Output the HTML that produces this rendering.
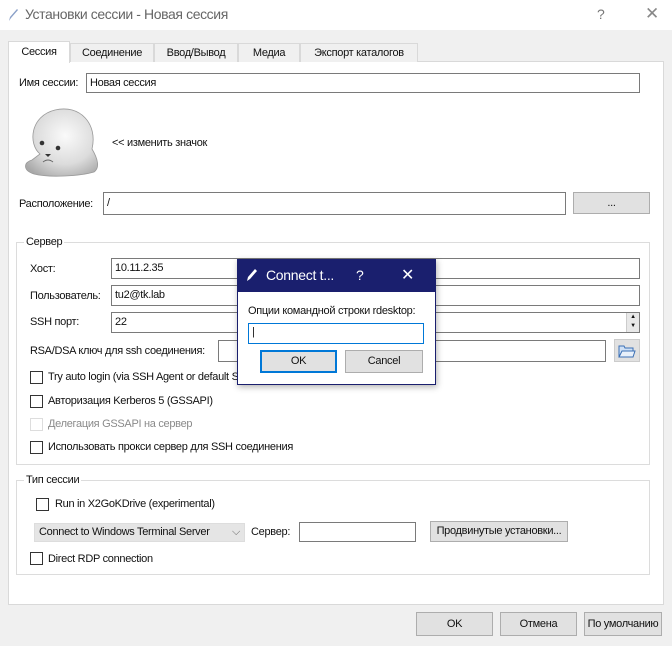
<!DOCTYPE html>
<html><head><meta charset="utf-8"><style>
*{box-sizing:border-box;margin:0;padding:0}
body{width:672px;height:646px;overflow:hidden;background:#f0f0f0;font-family:"Liberation Sans",sans-serif;font-size:11px;color:#111;position:relative;letter-spacing:-0.3px}
.a{position:absolute;white-space:nowrap}
.inp{position:absolute;background:#fff;border:1px solid #7a7a7a;padding-left:3px;line-height:19px}
.btn{position:absolute;background:#e1e1e1;border:1px solid #adadad;text-align:center}
.cb{position:absolute;width:13px;height:13px;border:1px solid #333;background:#fff}
.tab{position:absolute;top:43px;height:19px;border:1px solid #d9d9d9;border-bottom:none;background:#f0f0f0;text-align:center;line-height:18px}
.grp{position:absolute;border:1px solid #dcdcdc}
.gt{position:absolute;background:#fff;padding:0 2px}
</style></head><body>
<div class="a" style="left:0;top:0;width:672px;height:30px;background:#fff"></div>
<svg class="a" style="left:7px;top:8px" width="12" height="14"><path d="M2 13 L3 9 L10 1 L11 2 L4 10 Z" fill="#8aa0c8"/></svg>
<div class="a" style="left:25px;top:6px;font-size:14px;color:#666;letter-spacing:-0.4px">Установки сессии - Новая сессия</div>
<div class="a" style="left:597px;top:6px;font-size:14px;color:#777">?</div>
<div class="a" style="left:645px;top:4px;font-size:17px;color:#888;font-weight:100">✕</div>

<div class="a" style="left:8px;top:61px;width:656px;height:544px;background:#fff;border:1px solid #d9d9d9"></div>
<div class="tab" style="left:8px;top:41px;width:62px;height:22px;background:#fff;line-height:20px">Сессия</div>
<div class="tab" style="left:70px;width:84px">Соединение</div>
<div class="tab" style="left:154px;width:84px">Ввод/Вывод</div>
<div class="tab" style="left:238px;width:62px">Медиа</div>
<div class="tab" style="left:300px;width:118px">Экспорт каталогов</div>

<div class="a" style="left:19px;top:77px">Имя сессии:</div>
<div class="inp" style="left:86px;top:73px;width:554px;height:20px;line-height:18px">Новая сессия</div>

<svg class="a" style="left:20px;top:104px" width="82" height="75" viewBox="0 0 82 75">
<defs><radialGradient id="g" cx="0.55" cy="0.4" r="0.7"><stop offset="0" stop-color="#fafafa"/><stop offset="0.6" stop-color="#dcdcdc"/><stop offset="1" stop-color="#a8a8a8"/></radialGradient></defs>
<path d="M20 50 C8 40 10 12 35 6 C60 0 78 20 72 45 C78 55 80 64 74 68 C60 72 30 74 14 70 C2 66 4 58 12 56 Z" fill="url(#g)" stroke="#999" stroke-width="0.8"/>
<circle cx="22" cy="39" r="2.3" fill="#333"/><circle cx="38" cy="44" r="2.3" fill="#333"/>
<path d="M25 50 L31 50 L28 53 Z" fill="#333"/><path d="M23 58 Q28 54 33 58" stroke="#666" fill="none"/>
</svg>
<div class="a" style="left:112px;top:137px">&lt;&lt; изменить значок</div>

<div class="a" style="left:19px;top:198px">Расположение:</div>
<div class="inp" style="left:103px;top:192px;width:463px;height:23px;line-height:21px">/</div>
<div class="btn" style="left:573px;top:192px;width:77px;height:22px;line-height:20px">...</div>

<div class="grp" style="left:16px;top:242px;width:634px;height:223px"></div>
<div class="gt" style="left:24px;top:236px">Сервер</div>
<div class="a" style="left:30px;top:263px">Хост:</div>
<div class="inp" style="left:111px;top:258px;width:529px;height:21px">10.11.2.35</div>
<div class="a" style="left:30px;top:290px">Пользователь:</div>
<div class="inp" style="left:111px;top:285px;width:529px;height:21px">tu2@tk.lab</div>
<div class="a" style="left:30px;top:316px">SSH порт:</div>
<div class="inp" style="left:111px;top:312px;width:529px;height:21px">22</div>
<div class="a" style="left:626px;top:313px;width:13px;height:19px;background:#e8e8e8;border-left:1px solid #ccc;font-size:6px;line-height:9px;text-align:center">▲<br>▼</div>
<div class="a" style="left:30px;top:345px">RSA/DSA ключ для ssh соединения:</div>
<div class="inp" style="left:218px;top:340px;width:388px;height:22px"></div>
<div class="a" style="left:614px;top:339px;width:26px;height:23px;background:#e1e1e1;border:1px solid #ccc"></div>
<svg class="a" style="left:618px;top:343px" width="18" height="16"><path d="M1 3 H6 L7 5 H15 V14 H1 Z" fill="#cfe0f5" stroke="#3a6fb5"/><path d="M1 14 L4 8 H17 L15 14 Z" fill="#e8f0fa" stroke="#3a6fb5"/></svg>
<div class="cb" style="left:30px;top:371px"></div><div class="a" style="left:48px;top:371px">Try auto login (via SSH Agent or default SSH key)</div>
<div class="cb" style="left:30px;top:395px"></div><div class="a" style="left:48px;top:395px">Авторизация Kerberos 5 (GSSAPI)</div>
<div class="cb" style="left:30px;top:418px;border-color:#ddd"></div><div class="a" style="left:48px;top:418px;color:#8a8a8a">Делегация GSSAPI на сервер</div>
<div class="cb" style="left:30px;top:441px"></div><div class="a" style="left:48px;top:441px">Использовать прокси сервер для SSH соединения</div>

<div class="grp" style="left:16px;top:480px;width:634px;height:95px"></div>
<div class="gt" style="left:24px;top:474px">Тип сессии</div>
<div class="cb" style="left:36px;top:498px"></div><div class="a" style="left:55px;top:498px">Run in X2GoKDrive (experimental)</div>
<div class="a" style="left:34px;top:523px;width:211px;height:19px;background:#e5e5e5;border:1px solid #ddd;line-height:17px;padding-left:4px">Connect to Windows Terminal Server <span style="position:absolute;right:4px;color:#666">⌵</span></div>
<div class="a" style="left:251px;top:526px">Сервер:</div>
<div class="inp" style="left:299px;top:522px;width:117px;height:20px"></div>
<div class="btn" style="left:430px;top:521px;width:138px;height:21px;line-height:19px">Продвинутые установки...</div>
<div class="cb" style="left:30px;top:552px"></div><div class="a" style="left:48px;top:553px">Direct RDP connection</div>

<div class="btn" style="left:416px;top:612px;width:77px;height:24px;line-height:22px">OK</div>
<div class="btn" style="left:500px;top:612px;width:77px;height:24px;line-height:22px">Отмена</div>
<div class="btn" style="left:584px;top:612px;width:78px;height:24px;line-height:22px">По умолчанию</div>

<div class="a" style="left:237px;top:259px;width:199px;height:126px;background:#fff;border:1px solid #1a1f6e;box-shadow:1px 2px 6px rgba(0,0,0,.3)"></div>
<div class="a" style="left:237px;top:259px;width:199px;height:33px;background:#1a1f6e"></div>
<svg class="a" style="left:246px;top:268px" width="12" height="14"><path d="M1 13 L2 9 L9 1 L11 3 L4 11 Z" fill="#fff"/></svg>
<div class="a" style="left:266px;top:267px;color:#fff;font-size:14px">Connect t...</div>
<div class="a" style="left:356px;top:267px;color:#fff;font-size:14px">?</div>
<div class="a" style="left:401px;top:265px;color:#fff;font-size:16px">✕</div>
<div class="a" style="left:248px;top:305px">Опции командной строки rdesktop:</div>
<div class="inp" style="left:248px;top:323px;width:176px;height:21px;border-color:#0078d7;line-height:17px">|</div>
<div class="btn" style="left:260px;top:350px;width:77px;height:23px;line-height:19px;border:2px solid #0078d7">OK</div>
<div class="btn" style="left:345px;top:350px;width:78px;height:23px;line-height:21px">Cancel</div>
</body></html>
